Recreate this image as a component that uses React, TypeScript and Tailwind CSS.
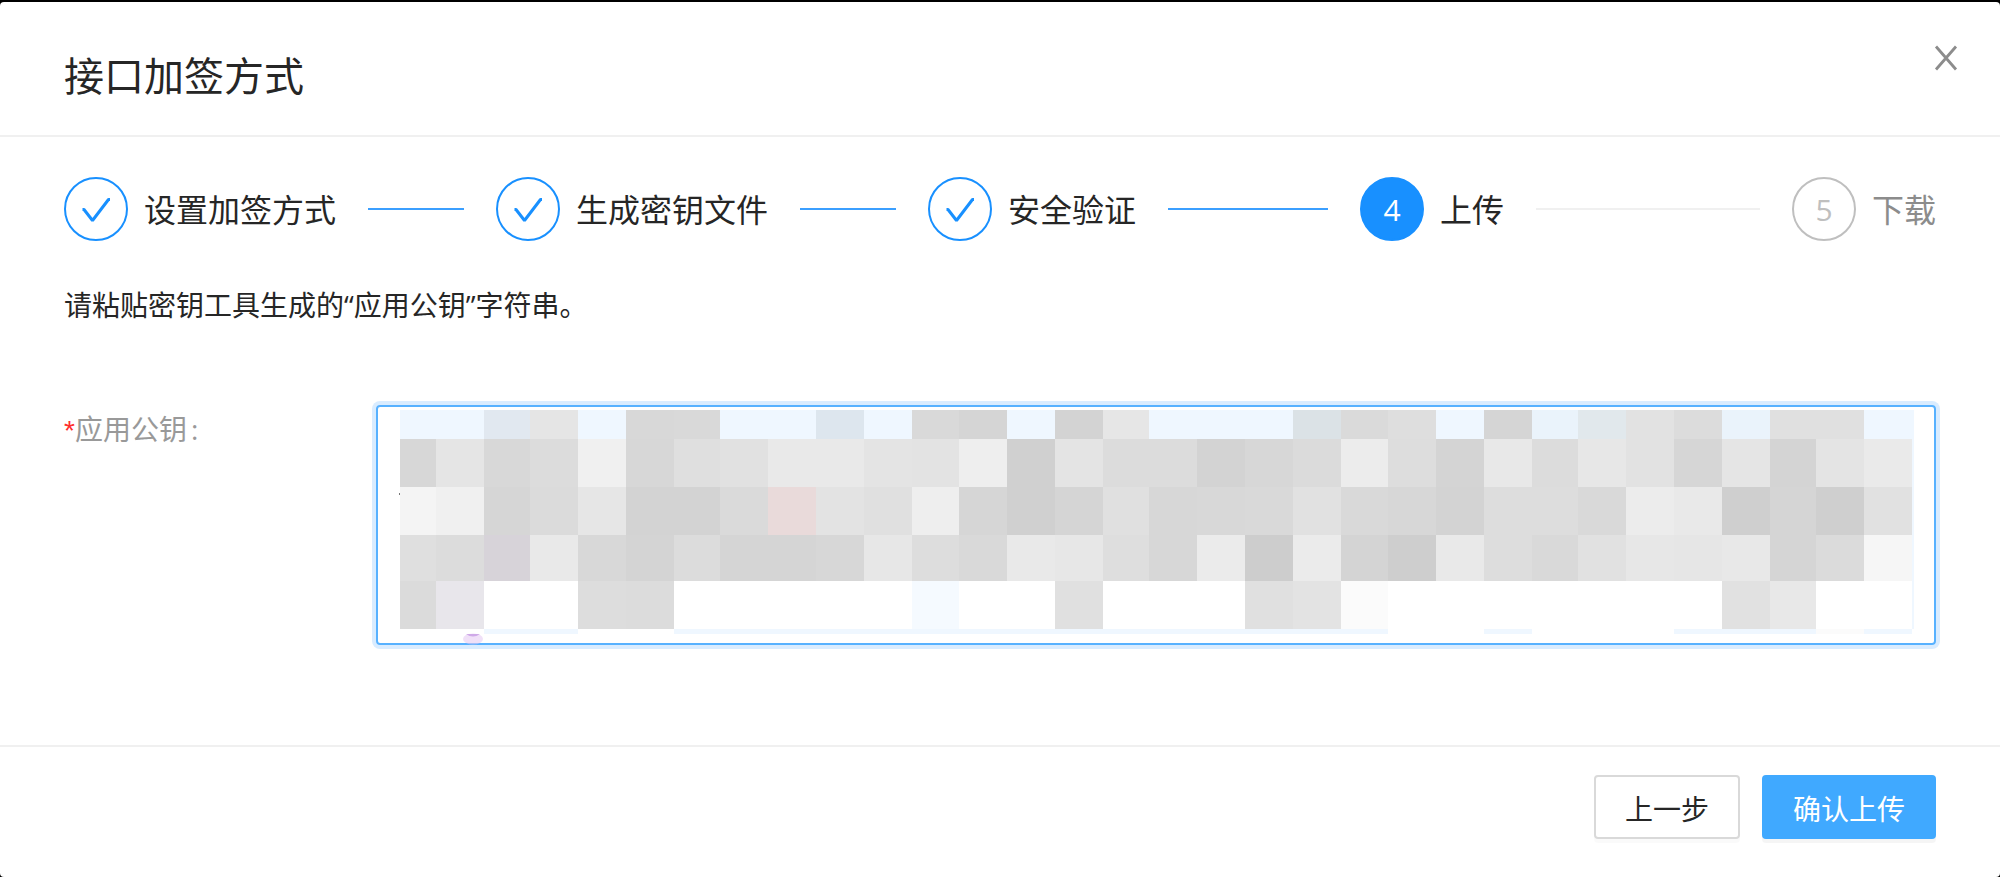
import { useState } from 'react';
import { clsx } from 'clsx';

type StepStatus = 'finish' | 'process' | 'wait';

interface Step {
  title: string;
  status: StepStatus;
}

const STEPS: Step[] = [
  { title: '设置加签方式', status: 'finish' },
  { title: '生成密钥文件', status: 'finish' },
  { title: '安全验证', status: 'finish' },
  { title: '上传', status: 'process' },
  { title: '下载', status: 'wait' },
];

// Column and row edges of the privacy mosaic
const COLS = [
  0, 36, 84, 130, 178, 226, 274, 320, 368, 416, 464, 512, 559, 607, 655, 703, 749, 797, 845, 893, 941, 988,
  1036, 1084, 1132, 1178, 1226, 1274, 1322, 1370, 1416, 1464, 1512,
];
const ROWS = [0, 29, 77, 125, 171, 219, 224];

// Two digits are a grey level, six a full colour, "--" is left empty
const CELLS = [
  'eff7ff eff7ff e1e8f0 e5 eff7ff d8 d9 eff7ff eff7ff dde6ee eff7ff d9 d5 eff7ff d3 e6 eff7ff eff7ff eff7ff dbe2e6 da de eff7ff d5 eaf3fb e1e8ec e2 dc eaf3fb e0 e0 eff7ff',
  'd7 e5 d8 dc f0 d7 df e1 e9 e9 e4 e3 ee d0 e4 dc dc d3 d7 db ec dd d4 e8 dc e7 e2 d6 e5 d4 e4 ea',
  'f4 f0 d6 db e6 d3 d3 da e9dada e3 e0 ee d6 d0 d5 e0 d7 d8 d9 e1 d9 d7 d3 dd dd d9 ec e9 cf d5 cf e1',
  'df dc d7d3d9 e9 d8 d4 dc d5 d5 d7 e7 dd d9 e9 e7 de d7 eb cd eb d4 ce e9 dd d9 e1 e7 e6 e8 d5 db f6',
  'db e8e6eb -- -- dd dc -- -- -- -- -- f5faff -- -- e0 -- -- -- e0 e3 fb -- -- -- -- -- -- -- e1 e8 -- --',
  '-- -- eff7ff eff7ff -- -- eff7ff eff7ff eff7ff eff7ff eff7ff eff7ff eff7ff eff7ff eff7ff eff7ff eff7ff eff7ff eff7ff eff7ff eff7ff -- -- eff7ff -- -- -- eff7ff eff7ff eff7ff fb eff7ff',
].map(row => row.split(' '));

function toColor(cell: string) {
  return cell.length === 2 ? `#${cell.repeat(3)}` : `#${cell}`;
}

export default function App() {
  const [publicKey, setPublicKey] = useState('');

  return (
    <div className="flex min-h-screen flex-col bg-black pt-0.5 font-['Open_Sans','Noto_Sans_CJK_SC',sans-serif] text-[#262626]">
      <div role="dialog" aria-labelledby="dialog-title" className="flex-1 rounded-sm bg-white">
        {/* Header */}
        <header className="flex items-start justify-between border-b-2 border-[#f0f0f0] pt-[42px] pr-10 pb-[31px] pl-16">
          <h1 id="dialog-title" className="mt-1 text-[40px] leading-14">接口加签方式</h1>
          <button type="button" aria-label="关闭" className="flex h-7 w-7 items-center justify-center text-[#8c8c8c]">
            <CloseIcon />
          </button>
        </header>

        {/* Body */}
        <main className="px-16 pt-10 pb-25">
          <ol className="flex">
            {STEPS.map((step, i) => (
              <StepItem key={step.title} step={step} index={i} last={i === STEPS.length - 1} />
            ))}
          </ol>

          <p className="mt-10 text-[28px] leading-12">请粘贴密钥工具生成的“应用公钥”字符串。</p>

          <div className="mt-19 grid grid-cols-6">
            <label htmlFor="public-key" className="text-[28px] leading-12 text-[#999]">
              <span className="font-['Liberation_Sans',sans-serif] text-[#ff2d2d]">*</span>应用公钥<span className="ml-1">:</span>
            </label>
            <div className="relative col-span-5">
              <textarea
                id="public-key"
                value={publicKey}
                onChange={e => setPublicKey(e.target.value)}
                className="block h-60 w-full resize-none rounded-sm border-2 border-[#57b1ff] px-6 py-2 text-[28px] ring-4 ring-[#d9ecff] outline-none"
              />
              <Mosaic />
            </div>
          </div>
        </main>

        {/* Footer */}
        <footer className="flex justify-end gap-[22px] border-t-2 border-[#f0f0f0] px-16 pt-7 pb-9">
          <button type="button" className="h-16 rounded-sm border-2 border-[#d9d9d9] px-[29px] pt-1 text-[28px] leading-none shadow-[0_4px_0_rgba(0,0,0,0.02)]">
            上一步
          </button>
          <button type="button" className="h-16 rounded-sm border-2 border-[#40a9ff] bg-[#40a9ff] px-[29px] pt-1 text-[28px] leading-none text-white shadow-[0_4px_0_rgba(0,0,0,0.04)]">
            确认上传
          </button>
        </footer>
      </div>
    </div>
  );
}

interface StepItemProps {
  step: Step;
  index: number;
  last: boolean;
}

function StepItem({ step, index, last }: StepItemProps) {
  const { title, status } = step;

  return (
    <li className={clsx('flex items-center', !last && 'flex-1')}>
      <span
        className={clsx(
          'flex h-16 w-16 shrink-0 items-center justify-center rounded-full border-2 text-[30px]',
          status === 'finish' && 'border-[#1890ff] text-[#1890ff]',
          status === 'process' && 'border-[#1890ff] bg-[#1890ff] font-medium text-white',
          status === 'wait' && 'border-[#bfbfbf] text-[#bfbfbf]'
        )}
      >
        {status === 'finish' ? <CheckIcon /> : index + 1}
      </span>
      <span
        className={clsx(
          'ml-4 shrink-0 pt-0.5 text-[32px] leading-15',
          status === 'wait' && 'text-[#8c8c8c]'
        )}
      >
        {title}
      </span>
      {!last && (
        <span className={clsx('mx-8 h-0.5 flex-1', status === 'finish' ? 'bg-[#3b9fff]' : 'bg-[#f0f0f0]')} />
      )}
    </li>
  );
}

function CheckIcon() {
  return (
    <svg viewBox="0 0 32 32" className="h-8 w-8" fill="none" stroke="currentColor" strokeWidth="3">
      <path d="M2.500 16.500H4L12.500 27.500L28.500 6.500H30" strokeLinejoin="bevel" />
    </svg>
  );
}

function CloseIcon() {
  return (
    <svg viewBox="0 0 28 28" className="h-7 w-7" fill="none" stroke="currentColor" strokeWidth="2.8">
      <path d="M4 2.500L24 25.500M24 2.500L4 25.500" />
    </svg>
  );
}

function Mosaic() {
  return (
    <svg
      aria-hidden="true"
      viewBox="0 0 1560 240"
      preserveAspectRatio="none"
      className="pointer-events-none absolute inset-0 h-full w-full"
    >
      <g transform="translate(24 5)" shapeRendering="crispEdges">
        {CELLS.map((row, r) =>
          row.map((cell, c) =>
            cell === '--' ? null : (
              <rect
                key={`${r}-${c}`}
                x={COLS[c]}
                y={ROWS[r]}
                width={COLS[c + 1] - COLS[c]}
                height={ROWS[r + 1] - ROWS[r]}
                fill={toColor(cell)}
              />
            )
          )
        )}
        <rect x="1512" y="0" width="2" height="219" fill="#eff7ff" />
        <rect x="-1" y="83" width="1" height="2" fill="#777" />
      </g>
      <ellipse cx="97" cy="234" rx="10" ry="5.5" fill="#e3c6f2" fillOpacity="0.55" />
      <path d="M90 229Q97 234 104 229Z" fill="#cfa9e8" />
    </svg>
  );
}
